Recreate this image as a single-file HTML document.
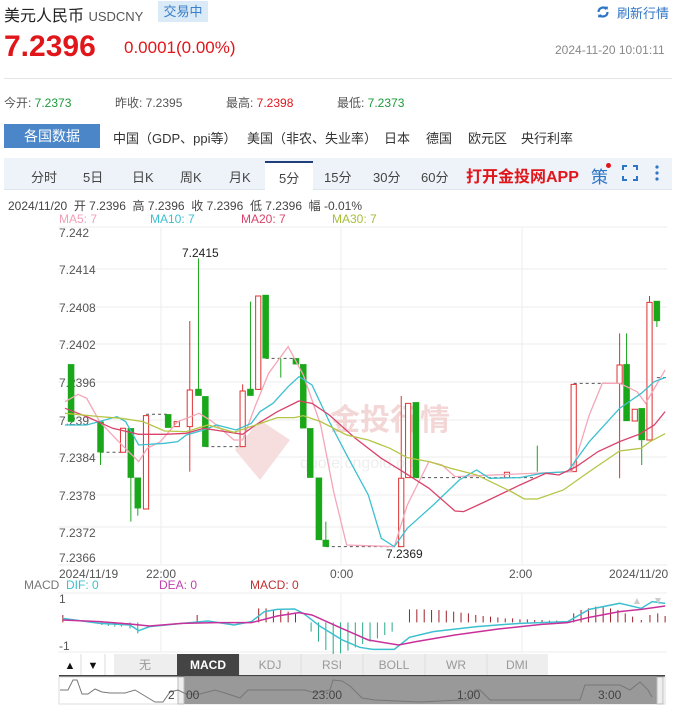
<!DOCTYPE html>
<html><head><meta charset="utf-8"><style>
*{margin:0;padding:0;box-sizing:border-box}
body{width:676px;height:708px;overflow:hidden;background:#fff;font-family:"Liberation Sans","Noto Sans CJK SC",sans-serif;color:#333;position:relative}
.a{position:absolute;white-space:nowrap}
</style></head><body>
<div class="a" style="left:4px;top:2px;font-size:16px;color:#222">美元人民币 <span style="font-size:13px;color:#555">USDCNY</span></div>
<div class="a" style="left:158px;top:1px;width:50px;height:21px;background:#dbeaf7;color:#3a7fc8;font-size:13px;line-height:21px;text-align:center">交易中</div>
<svg class="a" style="left:596px;top:5px" width="14" height="14" viewBox="0 0 14 14"><path d="M2.5 7a4.5 4.5 0 0 1 8-2.8" stroke="#2f75c6" stroke-width="2.2" fill="none"/><path d="M11.5 7a4.5 4.5 0 0 1-8 2.8" stroke="#2f75c6" stroke-width="2.2" fill="none"/><path d="M9 1.5l3 .3-.5 3.2z M5 12.5l-3-.3.5-3.2z" fill="#2f75c6"/></svg>
<div class="a" style="left:617px;top:3px;font-size:13px;color:#2f75c6">刷新行情</div>
<div class="a" style="left:4px;top:30px;font-size:30px;font-weight:bold;color:#e0161b">7.2396</div>
<div class="a" style="left:124px;top:38px;font-size:17px;color:#e0161b">0.0001(0.00%)</div>
<div class="a" style="left:555px;top:43px;font-size:12px;color:#888">2024-11-20 10:01:11</div>
<div class="a" style="left:4px;top:78px;width:668px;height:1px;background:#e5e5e5"></div>
<div class="a" style="left:4px;top:94px;font-size:12px;color:#555">今开: <span style="color:#1a9a3a">7.2373</span></div>
<div class="a" style="left:115px;top:94px;font-size:12px;color:#555">昨收: 7.2395</div>
<div class="a" style="left:226px;top:94px;font-size:12px;color:#555">最高: <span style="color:#e0161b">7.2398</span></div>
<div class="a" style="left:337px;top:94px;font-size:12px;color:#555">最低: <span style="color:#1a9a3a">7.2373</span></div>
<div class="a" style="left:4px;top:124px;width:96px;height:24px;background:#4a86c8;color:#fff;font-size:14px;line-height:24px;text-align:center">各国数据</div>
<div class="a" style="left:113px;top:128px;font-size:13px;color:#333">中国（GDP、ppi等）</div>
<div class="a" style="left:247px;top:128px;font-size:13px;color:#333">美国（非农、失业率）</div>
<div class="a" style="left:384px;top:128px;font-size:13px;color:#333">日本</div>
<div class="a" style="left:426px;top:128px;font-size:13px;color:#333">德国</div>
<div class="a" style="left:468px;top:128px;font-size:13px;color:#333">欧元区</div>
<div class="a" style="left:521px;top:128px;font-size:13px;color:#333">央行利率</div>
<div class="a" style="left:4px;top:158px;width:668px;height:32px;background:#eef3f9;border-bottom:1px solid #dde6f0"></div>
<div class="a" style="left:265px;top:161px;width:48px;height:30px;background:#fff;border-top:2px solid #1f3f7a"></div>
<div class="a" style="top:167px;left:31px;font-size:13px;color:#444;word-spacing:0">分时</div>
<div class="a" style="top:167px;left:83px;font-size:13px;color:#444">5日</div>
<div class="a" style="top:167px;left:132px;font-size:13px;color:#444">日K</div>
<div class="a" style="top:167px;left:180px;font-size:13px;color:#444">周K</div>
<div class="a" style="top:167px;left:229px;font-size:13px;color:#444">月K</div>
<div class="a" style="top:168px;left:279px;font-size:13px;color:#444">5分</div>
<div class="a" style="top:167px;left:324px;font-size:13px;color:#444">15分</div>
<div class="a" style="top:167px;left:373px;font-size:13px;color:#444">30分</div>
<div class="a" style="top:167px;left:421px;font-size:13px;color:#444">60分</div>
<div class="a" style="top:163px;left:466px;font-size:16px;font-weight:bold;color:#e0161b">打开金投网APP</div>
<div class="a" style="top:163px;left:591px;font-size:17px;color:#2f75c6">策</div>
<div class="a" style="top:163px;left:606px;width:5px;height:5px;border-radius:50%;background:#e0161b"></div>
<svg class="a" style="left:622px;top:165px" width="16" height="16" viewBox="0 0 16 16" fill="none" stroke="#2f75c6" stroke-width="2"><path d="M1 5V1h4M11 1h4v4M15 11v4h-4M5 15H1v-4"/></svg>
<svg class="a" style="left:654px;top:165px" width="6" height="16"><circle cx="3" cy="2" r="1.6" fill="#2f75c6"/><circle cx="3" cy="8" r="1.6" fill="#2f75c6"/><circle cx="3" cy="14" r="1.6" fill="#2f75c6"/></svg>
<div class="a" style="left:8px;top:197px;font-size:12px;color:#444">2024/11/20 &nbsp;开 7.2396 &nbsp;高 7.2396 &nbsp;收 7.2396 &nbsp;低 7.2396 &nbsp;幅 -0.01%</div>
<div class="a" style="left:59px;top:212px;font-size:12px;color:#f0a0b8">MA5: 7</div>
<div class="a" style="left:150px;top:212px;font-size:12px;color:#3cc0d0">MA10: 7</div>
<div class="a" style="left:241px;top:212px;font-size:12px;color:#d9436b">MA20: 7</div>
<div class="a" style="left:332px;top:212px;font-size:12px;color:#a6bf3a">MA30: 7</div>
<svg class="a" style="left:0;top:0" width="676" height="708">
<g stroke="#eee" stroke-width="1">
<line x1="58" y1="227" x2="667" y2="227"/><line x1="58" y1="269" x2="667" y2="269"/><line x1="58" y1="307" x2="667" y2="307"/><line x1="58" y1="344" x2="667" y2="344"/><line x1="58" y1="382" x2="667" y2="382"/><line x1="58" y1="420" x2="667" y2="420"/><line x1="58" y1="457" x2="667" y2="457"/><line x1="58" y1="495" x2="667" y2="495"/><line x1="58" y1="527" x2="667" y2="527"/><line x1="58" y1="565" x2="667" y2="565"/>
<line x1="161" y1="227" x2="161" y2="565"/><line x1="341" y1="227" x2="341" y2="565"/><line x1="522" y1="227" x2="522" y2="565"/>
<line x1="58" y1="593" x2="667" y2="593"/><line x1="58" y1="652" x2="667" y2="652"/>
<line x1="161" y1="593" x2="161" y2="652"/><line x1="341" y1="593" x2="341" y2="652"/><line x1="522" y1="593" x2="522" y2="652"/>
</g>
<g font-size="12" fill="#555">
<text x="59" y="237">7.242</text><text x="59" y="274">7.2414</text><text x="59" y="312">7.2408</text><text x="59" y="349">7.2402</text><text x="59" y="387">7.2396</text><text x="59" y="425">7.239</text><text x="59" y="462">7.2384</text><text x="59" y="500">7.2378</text><text x="59" y="537">7.2372</text><text x="59" y="562">7.2366</text>
<text x="59" y="578">2024/11/19</text><text x="146" y="578">22:00</text><text x="330" y="578">0:00</text><text x="509" y="578">2:00</text><text x="609" y="578">2024/11/20</text>
<text x="182" y="257" fill="#222">7.2415</text><text x="386" y="558" fill="#222">7.2369</text>
</g>
<text x="330" y="430" font-size="30" fill="#f3d6d6" font-weight="bold">金投行情</text>
<text x="300" y="468" font-size="16" fill="#eee">quote.cngold.org</text>
<path d="M260 420l30 20-30 40-25-30z" fill="#f6dede"/>
<g transform="translate(0,195) scale(0.4333,0.3333)" fill="none">
<g stroke="#555" stroke-dasharray="3,3" vector-effect="non-scaling-stroke">
<path d="M232 772H284M337 658H388M474 755H560M613 490H683M752 1055H926M960 848H1240M1324 565H1430M1516 548H1540" vector-effect="non-scaling-stroke"/>
</g>
<g stroke="#1aa71a" fill="#1aa71a">
<path d="M232 680V810M302 700V980M318 848V962M458 190V602M578 320V602M648 490V548M752 980V1055M1240 752V830M1446 415V678M1481 640V810M1516 318V396" vector-effect="non-scaling-stroke"/>
<rect x="157" y="508" width="14" height="172"/><rect x="225" y="680" width="14" height="92"/><rect x="295" y="700" width="14" height="148"/><rect x="311" y="848" width="14" height="92"/><rect x="381" y="658" width="14" height="40"/><rect x="451" y="582" width="14" height="20"/><rect x="467" y="604" width="14" height="151"/><rect x="571" y="582" width="14" height="20"/><rect x="606" y="300" width="14" height="190"/><rect x="676" y="490" width="14" height="18"/><rect x="693" y="508" width="14" height="192"/><rect x="709" y="700" width="14" height="148"/><rect x="729" y="848" width="14" height="187"/><rect x="745" y="1035" width="14" height="20"/><rect x="953" y="622" width="14" height="226"/><rect x="1439" y="508" width="14" height="170"/><rect x="1474" y="640" width="14" height="95"/><rect x="1509" y="318" width="14" height="60"/>
</g>
<g stroke="#e03030" fill="#fff">
<path d="M438 378V830M560 568V588M926 603V850M1430 415V850M1499 303V322" vector-effect="non-scaling-stroke"/>
<rect x="278" y="700" width="12" height="72" vector-effect="non-scaling-stroke"/><rect x="331" y="662" width="12" height="280" vector-effect="non-scaling-stroke"/><rect x="402" y="680" width="12" height="15" vector-effect="non-scaling-stroke"/><rect x="432" y="585" width="12" height="110" vector-effect="non-scaling-stroke"/><rect x="554" y="588" width="12" height="167" vector-effect="non-scaling-stroke"/><rect x="590" y="303" width="12" height="280" vector-effect="non-scaling-stroke"/><rect x="920" y="850" width="12" height="205" vector-effect="non-scaling-stroke"/><rect x="936" y="625" width="12" height="223" vector-effect="non-scaling-stroke"/><rect x="1164" y="832" width="12" height="16" vector-effect="non-scaling-stroke"/><rect x="1318" y="568" width="12" height="262" vector-effect="non-scaling-stroke"/><rect x="1424" y="510" width="12" height="55" vector-effect="non-scaling-stroke"/><rect x="1459" y="643" width="12" height="35" vector-effect="non-scaling-stroke"/><rect x="1493" y="322" width="12" height="413" vector-effect="non-scaling-stroke"/>
</g>
<polyline vector-effect="non-scaling-stroke" stroke="#f4a6b8" stroke-width="1.3" points="150,620 180,598 200,610 230,680 270,735 320,800 340,760 370,740 410,680 460,655 490,680 540,735 560,735 590,630 620,535 665,455 700,540 740,690 770,890 800,1050 910,1055 940,930 990,800 1020,810 1050,845 1320,830 1360,660 1390,565 1430,565 1470,590 1490,625 1535,525"/>
<polyline vector-effect="non-scaling-stroke" stroke="#3cc0d0" stroke-width="1.3" points="150,690 200,690 270,665 290,680 320,750 380,745 410,740 430,720 470,705 500,690 545,705 580,685 600,650 630,625 665,575 690,545 720,570 760,680 800,780 850,900 880,1030 910,1055 940,1000 1000,930 1060,855 1100,825 1130,850 1200,848 1250,835 1310,830 1360,740 1430,640 1480,595 1510,560 1535,548"/>
<polyline vector-effect="non-scaling-stroke" stroke="#d9436b" stroke-width="1.3" points="150,640 200,665 260,700 320,718 380,718 430,715 470,700 520,710 560,718 590,690 640,650 690,618 720,625 760,660 820,730 880,790 930,830 990,880 1050,948 1070,950 1120,920 1200,870 1260,835 1290,840 1330,815 1380,770 1430,740 1475,718 1510,690 1535,650"/>
<polyline vector-effect="non-scaling-stroke" stroke="#b5c545" stroke-width="1.3" points="150,655 230,665 280,670 330,680 380,708 430,710 480,690 540,712 590,690 640,668 680,668 700,662 740,680 800,720 850,735 900,760 940,788 990,800 1040,820 1100,840 1180,890 1210,912 1240,912 1300,885 1360,830 1430,768 1480,760 1500,740 1535,716"/>
</g>
<g font-size="12">
<text x="24" y="589" fill="#777">MACD</text><text x="66" y="589" fill="#3cc0d0">DIF: 0</text><text x="159" y="589" fill="#c040b0">DEA: 0</text><text x="250" y="589" fill="#c03030">MACD: 0</text>
<text x="59" y="603" fill="#555">1</text><text x="59" y="650" fill="#555">-1</text>
</g>
<g transform="translate(0,560) scale(0.4333,0.3333)" fill="none">
<path vector-effect="non-scaling-stroke" stroke="#a0202a" d="M145 165V187M455 165V187M597 145V187M614 145V187M631 148V187M648 150V187M665 155V187M682 160V187M945 148V187M962 148V187M979 148V187M996 150V187M1013 150V187M1030 152V187M1047 155V187M1064 158V187M1081 160V187M1098 165V187M1115 168V187M1132 170V187M1149 172V187M1166 175V187M1183 175V187M1200 178V187M1217 178V187M1234 180V187M1251 180V187M1268 182V187M1285 182V187M1324 160V187M1341 150V187M1358 145V187M1375 140V187M1392 140V187M1409 145V187M1426 150V187M1443 160V187M1460 170V187M1480 180V187M1500 165V187M1518 160V187M1535 168V187"/>
<path vector-effect="non-scaling-stroke" stroke="#2aa88a" d="M235 187V195M250 187V198M265 187V200M280 187V200M300 187V205M318 187V220M718 187V215M735 187V245M752 187V270M769 187V282M786 187V280M803 187V272M820 187V262M837 187V252M854 187V245M871 187V235M888 187V225M905 187V215"/>
<polyline vector-effect="non-scaling-stroke" stroke="#3cc0d0" stroke-width="1.5" points="145,175 230,190 300,195 320,212 345,200 420,190 480,183 540,195 580,185 610,155 640,148 680,147 700,160 740,200 790,240 830,262 860,268 910,268 945,232 1000,215 1100,200 1200,190 1310,185 1360,148 1430,130 1480,145 1505,125 1535,130"/>
<polyline vector-effect="non-scaling-stroke" stroke="#c8309a" stroke-width="1.5" points="145,180 230,185 300,192 345,198 420,190 500,188 580,188 640,168 690,158 720,165 780,200 850,240 920,255 960,245 1050,225 1150,207 1250,193 1310,188 1360,172 1430,155 1480,148 1535,138"/>
</g>
<g fill="#ccc"><path d="M634 604l3-6 3 6z M655 598l3 6 3-6z"/></g>
<rect x="59" y="654" width="489" height="21" fill="#eee"/>
<rect x="59" y="654" width="55" height="21" fill="#fff"/>
<g stroke="#ddd"><line x1="81" y1="654" x2="81" y2="675"/><line x1="105" y1="654" x2="105" y2="675"/><line x1="239" y1="654" x2="239" y2="675"/><line x1="301" y1="654" x2="301" y2="675"/><line x1="363" y1="654" x2="363" y2="675"/><line x1="425" y1="654" x2="425" y2="675"/><line x1="487" y1="654" x2="487" y2="675"/></g>
<rect x="177" y="654" width="62" height="21" fill="#444"/>
<g font-size="12" fill="#999" text-anchor="middle">
<text x="70" y="669" fill="#111" font-size="11">▲</text><text x="93" y="669" fill="#111" font-size="11">▼</text>
<text x="145" y="669">无</text><text x="208" y="669" fill="#fff" font-weight="bold">MACD</text><text x="270" y="669">KDJ</text><text x="332" y="669">RSI</text><text x="394" y="669">BOLL</text><text x="456" y="669">WR</text><text x="517" y="669">DMI</text>
</g>
<rect x="59" y="675" width="606" height="2" fill="#444"/>
<rect x="59" y="677" width="606" height="27" fill="#fff" stroke="#ddd"/>
<rect x="183" y="677" width="478" height="27" fill="#999"/>
<rect x="178" y="677" width="6" height="27" fill="#eee" stroke="#bbb"/>
<rect x="657" y="677" width="6" height="27" fill="#eee" stroke="#bbb"/>
<polyline fill="none" stroke="#777" points="60,690 68,690 73,680 77,680 82,694 88,694 95,689 102,692 110,693 125,693 135,690 145,696 155,702 163,702 170,692 178,690 186,694 200,694 215,690 225,693 240,698 248,690 260,690 290,690 305,690 315,693 330,690 333,680 342,681 350,686 362,698 375,700 420,702 460,700 468,700 475,690 480,690 490,700 580,700 585,685 620,685 630,690 640,682 648,690 652,697"/>
<g font-size="12" fill="#444"><text x="168" y="699">2</text><text x="186" y="699">00</text><text x="312" y="699">23:00</text><text x="457" y="699">1:00</text><text x="598" y="699">3:00</text></g>
</svg>
</body></html>
